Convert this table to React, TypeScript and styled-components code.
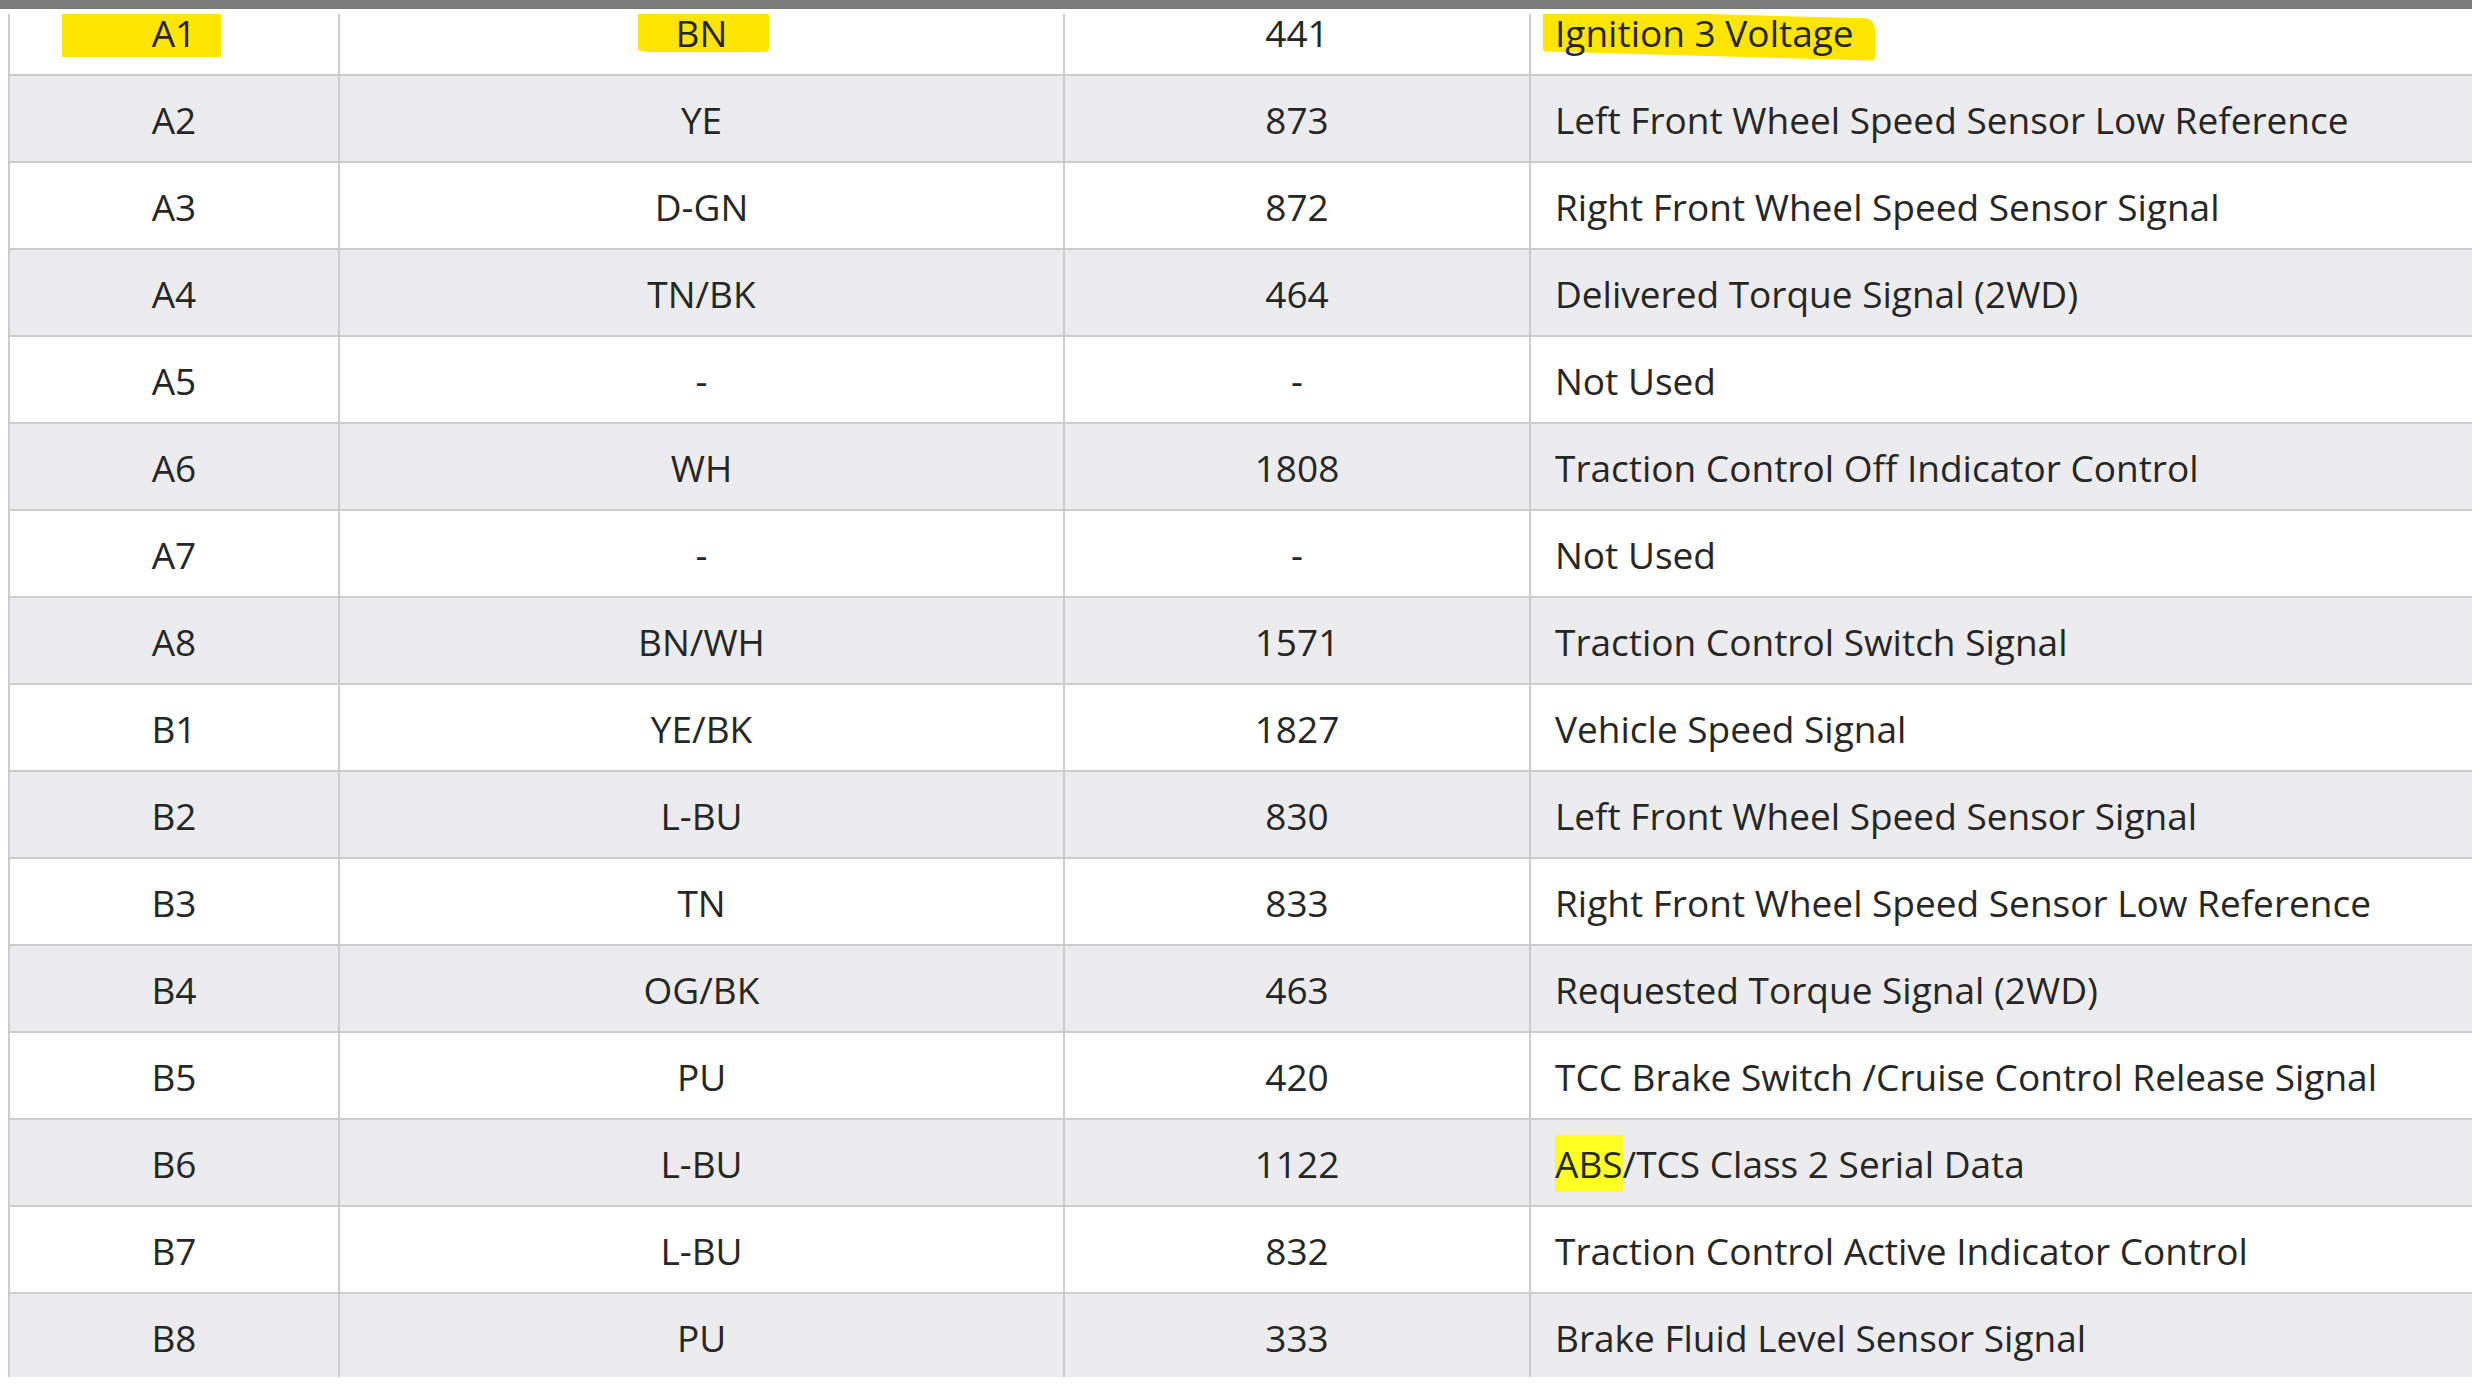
import React from "react";
import styled, { createGlobalStyle, css } from "styled-components";

const GlobalStyle = createGlobalStyle`
  html, body {
    margin: 0;
    padding: 0;
    background: #ffffff;
    overflow: hidden;
  }
  body {
    font-family: "Open Sans", "Noto Sans", sans-serif;
    color: #262626;
  }
`;

type Pin = {
  pin: string;
  color: string;
  circuit: string;
  func: string;
};

const pins: Pin[] = [
  { pin: "A1", color: "BN", circuit: "441", func: "Ignition 3 Voltage" },
  { pin: "A2", color: "YE", circuit: "873", func: "Left Front Wheel Speed Sensor Low Reference" },
  { pin: "A3", color: "D-GN", circuit: "872", func: "Right Front Wheel Speed Sensor Signal" },
  { pin: "A4", color: "TN/BK", circuit: "464", func: "Delivered Torque Signal (2WD)" },
  { pin: "A5", color: "-", circuit: "-", func: "Not Used" },
  { pin: "A6", color: "WH", circuit: "1808", func: "Traction Control Off Indicator Control" },
  { pin: "A7", color: "-", circuit: "-", func: "Not Used" },
  { pin: "A8", color: "BN/WH", circuit: "1571", func: "Traction Control Switch Signal" },
  { pin: "B1", color: "YE/BK", circuit: "1827", func: "Vehicle Speed Signal" },
  { pin: "B2", color: "L-BU", circuit: "830", func: "Left Front Wheel Speed Sensor Signal" },
  { pin: "B3", color: "TN", circuit: "833", func: "Right Front Wheel Speed Sensor Low Reference" },
  { pin: "B4", color: "OG/BK", circuit: "463", func: "Requested Torque Signal (2WD)" },
  { pin: "B5", color: "PU", circuit: "420", func: "TCC Brake Switch /Cruise Control Release Signal" },
  { pin: "B6", color: "L-BU", circuit: "1122", func: "ABS/TCS Class 2 Serial Data" },
  { pin: "B7", color: "L-BU", circuit: "832", func: "Traction Control Active Indicator Control" },
  { pin: "B8", color: "PU", circuit: "333", func: "Brake Fluid Level Sensor Signal" },
];

const App = () => {
  return (
    <>
      <GlobalStyle />
      <TopBar />
      <Viewport>
        <PinTable>
          <colgroup>
            <col style={{ width: 330 }} />
            <col style={{ width: 725 }} />
            <col style={{ width: 466 }} />
            <col style={{ width: 1100 }} />
          </colgroup>
          <tbody>
            {pins.map((p, i) => (
              <Row key={p.pin}>
                <Cell>
                  {i === 0 ? (
                    <Marker $left={90} $right={25} $top={-2} $bottom={-1}>
                      {p.pin}
                    </Marker>
                  ) : (
                    p.pin
                  )}
                </Cell>
                <Cell>
                  {i === 0 ? (
                    <Marker $left={38} $right={42} $top={1} $bottom={-6} $wavy>
                      {p.color}
                    </Marker>
                  ) : (
                    p.color
                  )}
                </Cell>
                <Cell>{p.circuit}</Cell>
                <FuncCell>
                  {i === 0 ? (
                    <Marker $left={12} $right={21} $top={-7} $bottom={-2} $slant>
                      {p.func}
                    </Marker>
                  ) : p.func.startsWith("ABS") ? (
                    <>
                      <SearchHit>ABS</SearchHit>
                      {p.func.slice(3)}
                    </>
                  ) : (
                    p.func
                  )}
                </FuncCell>
              </Row>
            ))}
          </tbody>
        </PinTable>
      </Viewport>
    </>
  );
};

export default App;

const TopBar = styled.div`
  height: 9px;
  background-color: #7a7a7a;
`;

const Viewport = styled.div`
  margin: 5px 0 0 8px;
  height: 1363px;
  overflow: hidden;
`;

// table is scrolled a little, the first row is cut at the top
const PinTable = styled.table`
  margin-top: -27px;
  width: 2621px;
  table-layout: fixed;
  border-collapse: collapse;
  font-size: 37px;
`;

const Row = styled.tr`
  height: 87px;
  background-color: #ffffff;

  &:nth-child(even) {
    background-color: #ececee;
  }
`;

const Cell = styled.td`
  border: 2px solid #cccccc;
  padding: 1px 0 0;
  text-align: center;
  vertical-align: middle;
  white-space: nowrap;
`;

const FuncCell = styled(Cell)`
  text-align: left;
  padding-left: 24px;
`;

const Marker = styled.span<{
  $left: number;
  $right: number;
  $top: number;
  $bottom: number;
  $wavy?: boolean;
  $slant?: boolean;
}>`
  position: relative;
  z-index: 0;

  &::before {
    content: "";
    position: absolute;
    z-index: -1;
    left: ${(p) => -p.$left}px;
    right: ${(p) => -p.$right}px;
    top: ${(p) => -p.$top}px;
    bottom: ${(p) => -p.$bottom}px;
    background: #ffe500;
    ${(p) =>
      p.$wavy &&
      css`
        border-radius: 2px 6px 4px 10px / 3px 2px 4px 3px;
      `}
    ${(p) =>
      p.$slant &&
      css`
        transform: skewY(1.6deg);
        border-radius: 2px 10px 4px 2px;
      `}
  }
`;

const SearchHit = styled.mark`
  display: inline-block;
  line-height: 57px;
  background-color: #ffff22;
  color: inherit;
`;
